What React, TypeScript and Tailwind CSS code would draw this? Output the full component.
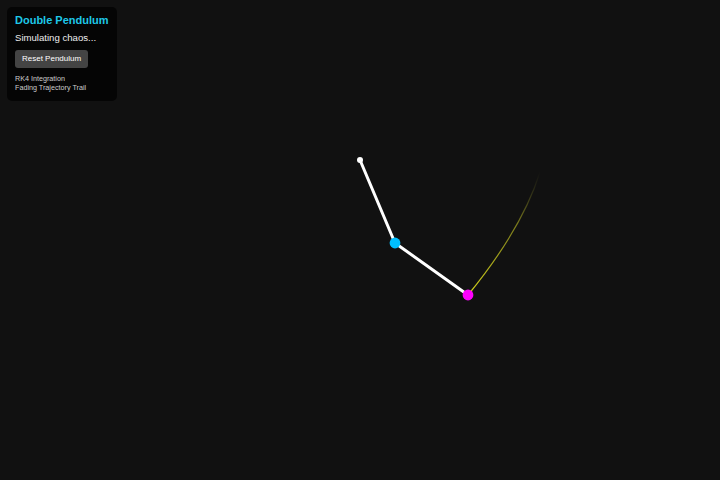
import { useState } from 'react';

// Static snapshot of the double pendulum state
const pivot = { x: 360, y: 160 };
const bob1 = { x: 395, y: 243 };
const bob2 = { x: 468, y: 295 };

export default function App() {
  const [runs, setRuns] = useState(0);

  return (
    <div
      className="relative w-full h-screen overflow-hidden bg-[#111111]"
      style={{ fontFamily: '"Liberation Sans", Arial, sans-serif' }}
    >
      <svg className="absolute inset-0" width={720} height={480} viewBox="0 0 720 480" key={runs}>
        <defs>
          <linearGradient id="trail" gradientUnits="userSpaceOnUse" x1={468} y1={295} x2={540} y2={172}>
            <stop offset="0" stopColor="#d4d41a" stopOpacity="1" />
            <stop offset="0.6" stopColor="#a8a820" stopOpacity="0.7" />
            <stop offset="1" stopColor="#6a6a2a" stopOpacity="0" />
          </linearGradient>
        </defs>

        {/* fading trajectory trail */}
        <path d="M468 295 C 495 262, 525 220, 540 172" fill="none" stroke="url(#trail)" strokeWidth={1.2} />

        {/* rods */}
        <line x1={pivot.x} y1={pivot.y} x2={bob1.x} y2={bob1.y} stroke="#ffffff" strokeWidth={3} strokeLinecap="round" />
        <line x1={bob1.x} y1={bob1.y} x2={bob2.x} y2={bob2.y} stroke="#ffffff" strokeWidth={3} strokeLinecap="round" />

        {/* pivot + bobs */}
        <circle cx={pivot.x} cy={pivot.y} r={3} fill="#ffffff" />
        <circle cx={bob1.x} cy={bob1.y} r={5.4} fill="#00bfff" />
        <circle cx={bob2.x} cy={bob2.y} r={5.4} fill="#ff00ff" />
      </svg>

      {/* info panel */}
      <div className="absolute left-[7px] top-[7px] w-fit whitespace-nowrap rounded-[5px] bg-black/70 px-[8px] pt-[6px] pb-[9px] text-white">
        <h1 className="text-[11px] leading-[14px] font-bold text-[#1ec8e8]">Double Pendulum</h1>
        <p className="mt-[5px] text-[9.6px] leading-[12px] text-[#eeeeee]">Simulating chaos...</p>
        <button
          onClick={() => setRuns(r => r + 1)}
          className="mt-[6px] block h-[18px] rounded-[3px] bg-[#444444] px-[7px] text-[8px] leading-[18px] text-white"
        >
          Reset Pendulum
        </button>
        <div className="mt-[6px] text-[7.2px] leading-[9px] text-[#cccccc]">
          <div>RK4 Integration</div>
          <div>Fading Trajectory Trail</div>
        </div>
      </div>
    </div>
  );
}
